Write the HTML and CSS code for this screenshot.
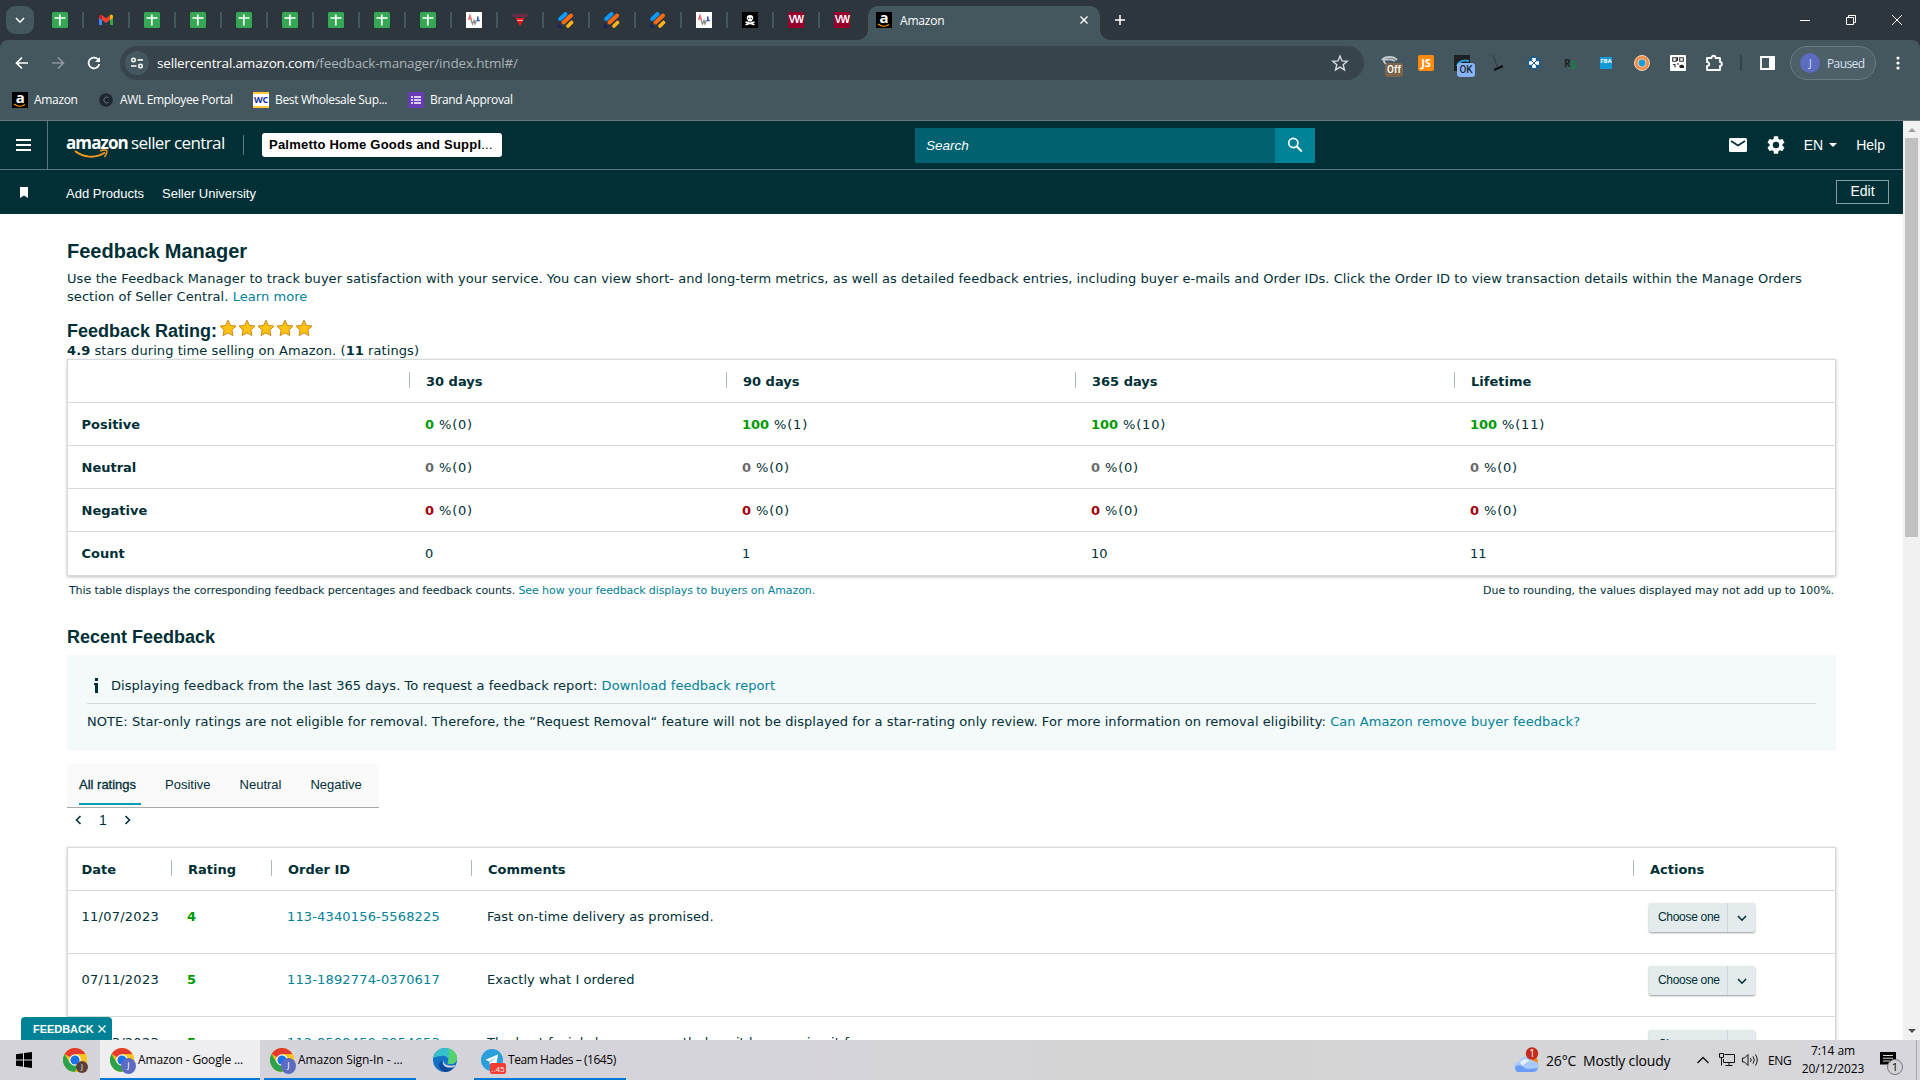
FILE: index.html
```html
<!DOCTYPE html>
<html lang="en">
<head>
    <meta charset="utf-8">
    <title>Amazon</title>
    <link rel="stylesheet" href="styles.css">
</head>

<body>
<!-- shared icons -->
<svg class="defs" xmlns="http://www.w3.org/2000/svg">
    <symbol id="sheets" viewBox="0 0 16 16">
        <rect width="16" height="16" rx="1.5" fill="#34a853"/>
        <path d="M2.5 6h11M7.8 2.5v11" stroke="#fff" stroke-width="1.7"/>
    </symbol>
    <symbol id="gmail" viewBox="0 0 16 16">
        <path d="M1 4v9h3V7z" fill="#4285f4"/>
        <path d="M15 4v9h-3V7z" fill="#34a853"/>
        <path d="M1 4.500c0-1.700 1.800-2.300 3-1.300V8L1 5.800z" fill="#c5221f"/>
        <path d="M15 4.500c0-1.700-1.800-2.300-3-1.300V8l3-2.200z" fill="#fbbc04"/>
        <path d="M4 3.200l4 3 4-3V8l-4 3-4-3z" fill="#ea4335"/>
    </symbol>
    <symbol id="stripes" viewBox="0 0 16 16">
        <path d="M0 11l5 5H0z" fill="#1b2559"/>
        <path d="M2.200 7L7.500 2" stroke="#0a9bff" stroke-width="4" stroke-linecap="round"/>
        <path d="M5.500 10.500L13 3.500" stroke="#ff6a13" stroke-width="4" stroke-linecap="round"/>
        <path d="M10 14L13.500 10.500" stroke="#ffb51b" stroke-width="3.600" stroke-linecap="round"/>
    </symbol>
    <symbol id="triangle" viewBox="0 0 16 16">
        <path d="M1 3.500h14" stroke="#8a1c2b" stroke-width="3"/>
        <path d="M0 3h16M2 5h12" stroke="#3b3f78" stroke-width="1" stroke-dasharray="2 1"/>
        <path d="M3.500 6h9L8 14z" fill="#f01818"/>
        <path d="M5 8.300h6" stroke="#fbb" stroke-width="1"/>
    </symbol>
    <symbol id="skull" viewBox="0 0 16 16">
        <rect width="16" height="16" fill="#000"/>
        <path d="M3.500 12.800l9-2.800M3.500 10l9 2.800" stroke="#fff" stroke-width="1.500"/>
        <path d="M8 3C4.300 3 4 6.800 5.800 8v1.600h4.400V8C12 6.800 11.700 3 8 3z" fill="#fff"/>
        <path d="M6.200 6.300h1M8.800 6.300h1" stroke="#000" stroke-width="1.200"/>
    </symbol>
    <symbol id="awl" viewBox="0 0 16 16">
        <rect width="16" height="16" fill="#fff"/>
        <path d="M2.500 8l1.500-4.500L5.500 8M3 6.500h2" stroke="#e86a6a" stroke-width="1.400" fill="none"/>
        <path d="M5 8l1.500 4L8 8.500 9 12l1.500-4" stroke="#888" stroke-width="1.300" fill="none"/>
        <path d="M11.800 4.500v4h2" stroke="#2f58b8" stroke-width="1.600" fill="none"/>
    </symbol>
    <symbol id="amazon" viewBox="0 0 16 16">
        <rect width="16" height="16" fill="#000"/>
        <text x="8" y="10.800" text-anchor="middle" fill="#fff" font-family="Open Sans" font-size="15" font-weight="bold">a</text>
        <path d="M2 12c3.500 2.800 8 2.800 11 .6" stroke="#f90" stroke-width="1.200" fill="none"/>
    </symbol>
    <symbol id="chrome" viewBox="0 0 24 24">
        <circle cx="12" cy="12" r="12" fill="#fbc116"/>
        <path d="M12 12L1.600 6A12 12 0 0 1 22.400 6z" fill="#e33b2e"/>
        <path d="M1.600 6A12 12 0 0 0 12 24l5.200-9L12 12 6.800 15z" fill="#2ba24c"/>
        <path d="M12 6h10.400A12 12 0 0 1 12 24l5.200-9z" fill="#fcc31e"/>
        <circle cx="12" cy="12" r="5.800" fill="#fff"/>
        <circle cx="12" cy="12" r="4.600" fill="#1a73e8"/>
    </symbol>
    <symbol id="star" viewBox="0 0 18 18">
        <path d="M9 1.200l2.400 5.200 5.600.7-4.100 3.900 1 5.600L9 13.900l-4.900 2.700 1-5.600L1 7.100l5.600-.7z" fill="#ffc20e" stroke="#c98a1a" stroke-width="1"/>
    </symbol>
    <symbol id="down" viewBox="0 0 10 10">
        <path d="M1 3l4 4.200L9 3" fill="none" stroke="currentColor" stroke-width="1.600"/>
    </symbol>
</svg>

<div class="browser">
    <!-- tab strip -->
    <div class="tabstrip">
        <div class="tab-search"><svg width="10" height="10"><use href="#down"/></svg></div>
        <div class="pinned">
            <span class="pin"><svg><use href="#sheets"/></svg></span>
            <span class="pin"><svg><use href="#gmail"/></svg></span>
            <span class="pin"><svg><use href="#sheets"/></svg></span>
            <span class="pin"><svg><use href="#sheets"/></svg></span>
            <span class="pin"><svg><use href="#sheets"/></svg></span>
            <span class="pin"><svg><use href="#sheets"/></svg></span>
            <span class="pin"><svg><use href="#sheets"/></svg></span>
            <span class="pin"><svg><use href="#sheets"/></svg></span>
            <span class="pin"><svg><use href="#sheets"/></svg></span>
            <span class="pin"><svg><use href="#awl"/></svg></span>
            <span class="pin"><svg><use href="#triangle"/></svg></span>
            <span class="pin"><svg><use href="#stripes"/></svg></span>
            <span class="pin"><svg><use href="#stripes"/></svg></span>
            <span class="pin"><svg><use href="#stripes"/></svg></span>
            <span class="pin"><svg><use href="#awl"/></svg></span>
            <span class="pin"><svg><use href="#skull"/></svg></span>
            <span class="pin"><b class="vw">VW</b></span>
            <span class="pin"><b class="vw">VW</b></span>
        </div>
        <div class="tab">
            <svg class="fav"><use href="#amazon"/></svg>
            <span class="tab-title">Amazon</span>
            <svg class="tab-close" width="8" height="8"><path d="M.5.5l7 7M7.500.5l-7 7" stroke="#fff" stroke-width="1.400"/></svg>
        </div>
        <svg class="new-tab" width="10" height="10"><path d="M5 0v10M0 5h10" stroke="#fff" stroke-width="1.500"/></svg>
        <div class="win-controls">
            <svg width="10" height="10"><path d="M0 5.500h10" stroke="#fff"/></svg>
            <svg width="10" height="10"><path d="M.5 2.500h7v7h-7zM2.500 2.500v-2h7v7h-2" fill="none" stroke="#fff"/></svg>
            <svg width="10" height="10"><path d="M0 0l10 10M10 0L0 10" stroke="#fff"/></svg>
        </div>
    </div>

    <!-- address bar -->
    <div class="toolbar">
        <svg class="nav" width="16" height="16" viewBox="0 0 16 16"><path d="M14 8H3M8 2.500L2.500 8 8 13.500" fill="none" stroke="#fff" stroke-width="1.700"/></svg>
        <svg class="nav dim" width="16" height="16" viewBox="0 0 16 16"><path d="M2 8h11M8 2.500L13.500 8 8 13.500" fill="none" stroke="#8b979d" stroke-width="1.700"/></svg>
        <svg class="nav" width="16" height="16" viewBox="0 0 16 16"><path d="M13.300 9A5.400 5.400 0 1 1 12 4.300L13.500 6" fill="none" stroke="#fff" stroke-width="1.700"/><path d="M14 2v5H9z" fill="#fff"/></svg>
        <div class="omnibox">
            <span class="site-info"><svg width="14" height="14" viewBox="0 0 14 14"><path d="M7.500 4H13M1 10h5.500" stroke="#fff" stroke-width="1.600"/><circle cx="3.500" cy="4" r="1.800" fill="none" stroke="#fff" stroke-width="1.400"/><circle cx="10.500" cy="10" r="1.800" fill="none" stroke="#fff" stroke-width="1.400"/></svg></span>
            <span class="url">sellercentral.amazon.com<em>/feedback-manager/index.html#/</em></span>
            <svg class="bookmark-star" width="18" height="18" viewBox="0 0 18 18"><path d="M9 2l2 4.900 5.200.4-4 3.400 1.300 5.200L9 13.100l-4.500 2.800 1.300-5.200-4-3.400L7 6.900z" fill="none" stroke="#d5dade" stroke-width="1.400"/></svg>
        </div>
        <div class="extensions">
            <span class="ext"><svg width="18" height="16"><path d="M1 5c3-4 12-4 15 0M2 4c1 4 3 5 5 7M3 5c4-1 8-1 11 1" stroke="#c3c8ca" stroke-width="1.800" fill="none"/></svg><i class="badge off">Off</i></span>
            <span class="ext"><b class="js">JS</b></span>
            <span class="ext"><svg width="16" height="16"><rect width="16" height="16" fill="#1e2124"/><path d="M3 11c2-5 7-6 12-5" stroke="#2d9bdc" stroke-width="2" fill="none"/></svg><i class="badge ok">OK</i></span>
            <span class="ext"><svg width="16" height="16"><path d="M3 0l5 14" stroke="#30383c"/><path d="M4 15l9-4" stroke="#111" stroke-width="2.400"/></svg></span>
            <span class="ext"><svg width="14" height="14"><circle cx="7" cy="7" r="6.800" fill="#1d5d8c"/><path d="M7 2v10M2 7h10" stroke="#fff" stroke-width="3.600"/><path d="M5 5l4 4M9 5l-4 4" stroke="#1d5d8c"/></svg></span>
            <span class="ext rs"><b>R</b><b class="green">S</b></span>
            <span class="ext"><b class="fba">FBA</b></span>
            <span class="ext"><svg width="16" height="16"><circle cx="8" cy="8" r="7.500" fill="#f08d45" stroke="#f4d6bd"/><circle cx="8" cy="8" r="4.500" fill="#f7c9a0"/><circle cx="8" cy="8" r="3.400" fill="#169edb"/></svg></span>
            <span class="ext"><svg width="16" height="16"><rect width="16" height="16" rx="1" fill="#fff"/><path d="M2.700 2.700h3.600v3.600H2.700zM9.700 2.700h3.600v3.600H9.700zM3 9.500h2v3M7.500 2v4M7 9h2" fill="none" stroke="#333" stroke-width="1.100"/><path d="M9 11c2-1 3-2 5 0v2h-4z" fill="#222"/></svg></span>
            <span class="ext"><svg width="18" height="18"><path d="M2 4h4.500c0-3 4-3 4 0H15v4c2.500 0 2.500 4 0 4v4H2v-4c3 0 3-4 0-4z" fill="none" stroke="#fff" stroke-width="1.800" stroke-linejoin="round"/></svg></span>
        </div>
        <span class="toolbar-sep"></span>
        <svg class="side-panel" width="16" height="16"><path d="M1 2h13v12H1z" fill="none" stroke="#fff" stroke-width="1.800"/><path d="M9 2h6v12H9z" fill="#fff"/></svg>
        <div class="profile"><span class="avatar">J</span>Paused</div>
        <svg class="kebab" width="4" height="16"><circle cx="2" cy="3" r="1.600" fill="#fff"/><circle cx="2" cy="8" r="1.600" fill="#fff"/><circle cx="2" cy="13" r="1.600" fill="#fff"/></svg>
    </div>

    <div class="bookmarks">
        <span class="bm bm-amazon"><svg class="fav"><use href="#amazon"/></svg>Amazon</span>
        <span class="bm bm-awl"><svg class="fav"><circle cx="7" cy="8" r="6.800" fill="#1e2730"/><path d="M9.500 5.500a3 3 0 1 0 0 5" fill="none" stroke="#687680"/></svg>AWL Employee Portal</span>
        <span class="bm bm-wc"><b class="wc">WC</b>Best Wholesale Sup...</span>
        <span class="bm bm-brand"><svg class="fav"><rect width="16" height="16" rx="1" fill="#673ab7"/><path d="M6 5h7M6 8h7M6 11h7M3 5h2M3 8h2M3 11h2" stroke="#fff" stroke-width="1.500"/></svg>Brand Approval</span>
    </div>
</div>

<div class="viewport">
    <div class="page">
        <!-- seller central header -->
        <div class="sc-nav">
            <div class="burger"><span></span><span></span><span></span></div>
            <div class="logo">
                <span class="logo-bold">amazon</span><span class="logo-thin">seller central</span>
                <svg class="smile" width="36" height="11" viewBox="0 0 36 11"><path d="M1 2c8 6.500 20 8 30 1.500" fill="none" stroke="#f7981d" stroke-width="2"/><path d="M26 2c3-1.500 7-1.500 7 0 0 2-1 4-2.500 6" fill="none" stroke="#f7981d" stroke-width="1.500"/></svg>
            </div>
            <span class="nav-sep"></span>
            <div class="account">Palmetto Home Goods and Suppl<span>...</span></div>
            <div class="search">
                <span class="search-input">Search</span>
                <span class="search-btn"><svg width="16" height="16" viewBox="0 0 16 16"><circle cx="6.300" cy="6" r="4.600" fill="none" stroke="#fff" stroke-width="1.700"/><path d="M9.800 9.500l5 5" stroke="#fff" stroke-width="2"/></svg></span>
            </div>
            <div class="nav-right">
                <svg width="18" height="14"><rect width="18" height="14" rx="1.500" fill="#fff"/><path d="M2 3l7 4.500L16 3" fill="none" stroke="#002f36" stroke-width="1.700"/></svg>
                <svg class="gear" width="18" height="18" viewBox="2 2 20 20"><path fill="#fff" d="M19.140 12.940c.04-.3.060-.61.060-.94s-.02-.64-.07-.94l2.030-1.580c.18-.14.230-.41.120-.61l-1.920-3.320c-.12-.22-.37-.29-.59-.22l-2.390.96c-.5-.38-1.030-.7-1.620-.94l-.36-2.540c-.04-.24-.24-.41-.48-.41h-3.840c-.24 0-.43.17-.47.41l-.36 2.540c-.59.24-1.130.57-1.620.94l-2.390-.96c-.22-.08-.47 0-.59.22L2.740 8.870c-.12.21-.08.470.12.610l2.030 1.580c-.05.3-.09.630-.09.940s.02.640.07.940l-2.030 1.580c-.18.14-.23.410-.12.610l1.920 3.320c.12.220.37.290.59.220l2.390-.96c.5.380 1.030.7 1.620.94l.36 2.540c.05.240.24.410.48.410h3.840c.24 0 .44-.17.470-.41l.36-2.540c.59-.24 1.130-.56 1.620-.94l2.390.96c.22.080.47 0 .59-.22l1.920-3.320c.12-.22.070-.47-.12-.61zM12 15.600A3.600 3.600 0 1 1 12 8.400a3.600 3.600 0 0 1 0 7.200z"/></svg>
                <span class="lang">EN</span>
                <span class="caret"></span>
                <span class="help">Help</span>
            </div>
        </div>
        <div class="sc-favs">
            <svg class="flag" width="8" height="11"><path d="M0 0h8v11L4 8.500 0 11z" fill="#fff"/></svg>
            <span class="fav-link add">Add Products</span>
            <span class="fav-link">Seller University</span>
            <span class="edit">Edit</span>
        </div>

        <div class="content">
            <h1>Feedback Manager</h1>
            <p class="intro">Use the Feedback Manager to track buyer satisfaction with your service. You can view short- and long-term metrics, as well as detailed feedback entries, including buyer e-mails and Order IDs. Click the Order ID to view transaction details within the Manage Orders<br>section of Seller Central. <a>Learn more</a></p>

            <div class="rating-line">
                <h2>Feedback Rating:</h2>
                <div class="stars">
                    <svg><use href="#star"/></svg><svg><use href="#star"/></svg><svg><use href="#star"/></svg><svg><use href="#star"/></svg><svg><use href="#star"/></svg>
                </div>
            </div>
            <p class="summary"><b>4.9</b> stars during time selling on Amazon. (<b>11</b> ratings)</p>

            <div class="table summary-table">
                <div class="row head"><span></span><span>30 days</span><span>90 days</span><span>365 days</span><span>Lifetime</span></div>
                <div class="row pos"><b>Positive</b><span><b>0</b> %(0)</span><span><b>100</b> %(1)</span><span><b>100</b> %(10)</span><span><b>100</b> %(11)</span></div>
                <div class="row neu"><b>Neutral</b><span><b>0</b> %(0)</span><span><b>0</b> %(0)</span><span><b>0</b> %(0)</span><span><b>0</b> %(0)</span></div>
                <div class="row neg"><b>Negative</b><span><b>0</b> %(0)</span><span><b>0</b> %(0)</span><span><b>0</b> %(0)</span><span><b>0</b> %(0)</span></div>
                <div class="row"><b>Count</b><span>0</span><span>1</span><span>10</span><span>11</span></div>
            </div>
            <div class="footnote">
                <span>This table displays the corresponding feedback percentages and feedback counts. <a>See how your feedback displays to buyers on Amazon.</a></span>
                <span class="rounding">Due to rounding, the values displayed may not add up to 100%.</span>
            </div>

            <h2 class="recent">Recent Feedback</h2>
            <div class="alert">
                <div class="alert-top"><svg width="5" height="15"><path d="M1 0h3v3H1zM0 5h4v10H1V7H0z" fill="#002f36"/></svg><span>Displaying feedback from the last 365 days. To request a feedback report: <a>Download feedback report</a></span></div>
                <div class="note">NOTE: Star-only ratings are not eligible for removal. Therefore, the ”Request Removal“ feature will not be displayed for a star-rating only review. For more information on removal eligibility: <a>Can Amazon remove buyer feedback?</a></div>
            </div>

            <div class="rating-tabs">
                <span class="active">All ratings</span><span>Positive</span><span>Neutral</span><span>Negative</span>
            </div>
            <div class="pager">
                <svg width="7" height="10"><path d="M5.500 1l-4 4 4 4" fill="none" stroke="#002f36" stroke-width="1.600"/></svg>
                <span>1</span>
                <svg width="7" height="10"><path d="M1.500 1l4 4-4 4" fill="none" stroke="#002f36" stroke-width="1.600"/></svg>
            </div>

            <div class="table feedback-table">
                <div class="row head"><span>Date</span><span>Rating</span><span>Order ID</span><span>Comments</span><span>Actions</span></div>
                <div class="row"><span class="num date">11/07/2023</span><span class="score">4</span><span class="num"><a>113-4340156-5568225</a></span><span>Fast on-time delivery as promised.</span><span class="action"><span class="choose"><span>Choose one</span><i><svg width="10" height="10"><use href="#down"/></svg></i></span></span></div>
                <div class="row"><span class="num date">07/11/2023</span><span class="score">5</span><span class="num"><a>113-1892774-0370617</a></span><span>Exactly what I ordered</span><span class="action"><span class="choose"><span>Choose one</span><i><svg width="10" height="10"><use href="#down"/></svg></i></span></span></div>
                <div class="row"><span class="num date">07/03/2023</span><span class="score">5</span><span class="num"><a>112-8598459-3954653</a></span><span>The best facial cleanser smooth, how it keeps using it f</span><span class="action"><span class="choose"><span>Choose one</span><i><svg width="10" height="10"><use href="#down"/></svg></i></span></span></div>
            </div>
        </div>
        <div class="feedback-btn">FEEDBACK <svg width="8" height="8"><path d="M.5.5l7 7M7.500.5l-7 7" stroke="#fff" stroke-width="1.200"/></svg></div>
    </div>
    <div class="scrollbar">
        <span class="arrow up"></span>
        <span class="thumb"></span>
        <span class="arrow down"></span>
    </div>
</div>

<!-- windows taskbar -->
<div class="taskbar">
    <svg class="start" width="16" height="16"><path d="M0 2.200L7 1.200V7.500H0zM8 1L16 0v7.500H8zM0 8.500h7v6.300L0 13.800zM8 8.500h8V16L8 15z" fill="#000"/></svg>
    <span class="app-icon chrome-pin"><svg width="24" height="24"><use href="#chrome"/></svg><i class="user brown">J</i></span>
    <div class="task current"><span class="app-icon"><svg width="24" height="24"><use href="#chrome"/></svg><i class="user">J</i></span><span class="t1">Amazon - Google ...</span></div>
    <div class="task second"><span class="app-icon"><svg width="24" height="24"><use href="#chrome"/></svg><i class="user">J</i></span><span class="t2">Amazon Sign-In - ...</span></div>
    <svg class="edge" width="24" height="24" viewBox="0 0 24 24">
        <circle cx="12" cy="12" r="12" fill="#1573c5"/>
        <path d="M.5 10C2 3 7 0 12 0c7 0 12 5 12 10 0 5-4 6-7 6-2 0-3-1-2-2 2-4-3-7-7-6-3 0-6 1-7.500 2z" fill="#35c1c9"/>
        <path d="M15 .5C21 2 24 6 24 10c0 5-4 6-7 6-2 0-3-1-2-2 1-3 2-9 0-13.500z" fill="#55d36c"/>
        <path d="M9 13c-1 5 5 8 12 6-3 4-6 5-9 5-6-1-9-9-3-11z" fill="#0d4a9b"/>
        <path d="M11 12c-1 4 3 7 12 5l-2 2C14 21 8 18 11 12z" fill="#d5d4da"/>
    </svg>
    <div class="task telegram"><span class="app-icon"><svg width="22" height="22"><circle cx="11" cy="11" r="11" fill="#2a9fdb"/><path d="M4.500 10.800L17 5.500l-2 11.500-4-3-2 2-.6-3.500z" fill="#fff"/><path d="M8.400 12.500L15 7.500l-5 6z" fill="#9cc9e8"/></svg><i class="count">..45</i></span><span class="t3">Team Hades – (1645)</span></div>

    <div class="tray">
        <svg class="weather" width="26" height="30"><circle cx="17" cy="17" r="7" fill="#f08a24"/><path d="M5 27a5 5 0 0 1 0-10 7.500 7.500 0 0 1 14-1 5.500 5.500 0 0 1 0 11z" fill="#a9c9fb"/><path d="M3 27a5 5 0 0 1-1-6c4-2 7 0 9 2s9 0 13 0c-1 3-3 4-5 4z" fill="#6c9df5"/><path d="M6 18a6 6 0 0 1 10-2c-3 0-5 3-7 5z" fill="#e3eeff"/><circle cx="18" cy="8.500" r="6.200" fill="#c42b1c"/><text x="18" y="12" text-anchor="middle" fill="#fff" font-family="Open Sans" font-size="10">1</text></svg>
        <span class="temp">26°C&nbsp; Mostly cloudy</span>
        <svg class="chev" width="12" height="8"><path d="M.5 7L6 1.500 11.500 7" fill="none" stroke="#111" stroke-width="1.400"/></svg>
        <svg class="net" width="17" height="14"><path d="M5.500 1.500h10v8h-11V6M10 9.500v3M6.500 12.500h7" fill="none" stroke="#111"/><path d="M.5.500h4v4h-4zM2.500 4.500v8" fill="none" stroke="#111"/></svg>
        <svg class="vol" width="17" height="14"><path d="M.5 5h2l3.500-3.500v11L2.500 9h-2z" fill="none" stroke="#111"/><path d="M8.500 5q1.400 2 0 4M11 3.300q2.500 3.700 0 7.400M13.500 1.500q3.500 5.500 0 11" fill="none" stroke="#111"/></svg>
        <span class="eng">ENG</span>
        <span class="clock"><span>7:14 am</span><span>20/12/2023</span></span>
        <span class="notify"><svg width="16" height="16"><path d="M0 0h16v12.500h-3V16l-3.500-3.500H0z" fill="#000"/><path d="M3 3.500h10M3 6.300h10M3 9h7" stroke="#d8d8dc" stroke-width="1.100"/></svg><i>1</i></span>
        <span class="peek"></span>
    </div>
</div>
</body>
</html>
```
FILE: styles.css
```css
* {
    box-sizing: border-box;
}
body {
    margin: 0;
    width: 1920px;
    height: 1080px;
    overflow: hidden;
    background-color: #FFFFFF;
    color: #002F36;
    font-family: "DejaVu Sans", Verdana, sans-serif;
    font-size: 13px;
}
svg {
    display: block;
    flex: none;
}
i, em {
    font-style: normal;
}
a {
    color: #008296;
}
h1, h2, p {
    margin: 0;
}
.defs {
    position: absolute;
    width: 0;
    height: 0;
}

/* Browser chrome */
.browser {
    height: 121px;
    background-color: #2C363C;
    border-bottom: 1px solid #6B797F;
    color: #FFFFFF;
    font-family: "Open Sans", sans-serif;
    font-size: 12px;
}
.tabstrip {
    display: flex;
    align-items: center;
    height: 40px;
    padding-left: 6px;
}
.tab-search {
    display: grid;
    place-items: center;
    width: 28px;
    height: 28px;
    margin-right: 4px;
    border-radius: 9px;
    background-color: #44575F;
}
.pinned {
    display: flex;
}
.pin {
    display: flex;
    align-items: center;
    justify-content: center;
    width: 46px;
    height: 16px;
    border-right: 2px solid #44575F;
}
.pin:last-child {
    border-color: transparent;
    margin-right: 2px;
}
.pin svg, .fav {
    width: 16px;
    height: 16px;
}
.vw {
    width: 16px;
    height: 16px;
    background-color: #96002B;
    font: bold 10px/16px "Liberation Sans", sans-serif;
    letter-spacing: -0.8px;
    text-align: center;
}
.tab {
    position: relative;
    display: flex;
    align-items: center;
    align-self: flex-end;
    width: 232px;
    height: 34px;
    padding: 0 12px 6px 8px;
    border-radius: 10px 10px 0 0;
    background-color: #44575F;
}
.tab::before, .tab::after {
    content: "";
    position: absolute;
    bottom: 0;
    left: -10px;
    width: 10px;
    height: 10px;
    background: radial-gradient(circle at 0 0, transparent 9.5px, #44575F 10px);
}
.tab::after {
    left: auto;
    right: -10px;
    background: radial-gradient(circle at 100% 0, transparent 9.5px, #44575F 10px);
}
.tab-title {
    flex: 1;
    margin-left: 8px;
    letter-spacing: -0.2px;
}
.new-tab {
    margin-left: 15px;
}
.win-controls {
    display: flex;
    gap: 36px;
    margin-left: auto;
    padding-right: 18px;
}
.toolbar {
    display: flex;
    align-items: center;
    height: 46px;
    padding: 0 20px 0 14px;
    border-radius: 8px 8px 0 0;
    background-color: #44575F;
}
.nav {
    margin-right: 20px;
}
.omnibox {
    display: flex;
    align-items: center;
    width: 1244px;
    height: 34px;
    margin-left: -2px;
    padding: 0 15px 0 5px;
    border-radius: 17px;
    background-color: #38444B;
}
.site-info {
    display: grid;
    place-items: center;
    width: 24px;
    height: 24px;
    border-radius: 50%;
    background-color: #44575F;
}
.url {
    flex: 1;
    margin-left: 8px;
    padding-bottom: 1px;
    font-size: 13.5px;
    letter-spacing: -0.18px;
}
.url em {
    color: #A9B2B7;
}
.extensions {
    display: flex;
    margin-left: 8px;
}
.ext {
    position: relative;
    display: flex;
    align-items: center;
    justify-content: center;
    width: 36px;
    height: 34px;
}
.badge {
    position: absolute;
    left: 13px;
    top: 17px;
    width: 18px;
    height: 14px;
    border-radius: 3px;
    font: 500 10px/14px Roboto, sans-serif;
    text-align: center;
}
.off {
    background-color: #7D654B;
}
.ok {
    background-color: #8AB4F8;
    color: #1B2733;
}
.js {
    width: 16px;
    height: 16px;
    border-radius: 2px;
    background-color: #FF8A0C;
    font: bold 11px/16px "Open Sans", sans-serif;
    text-align: center;
}
.rs {
    color: #1D2226;
    font-size: 10px;
}
.rs .green {
    margin-top: 3px;
    color: #0C8A3C;
}
.fba {
    width: 12px;
    height: 12px;
    background-color: #109AD7;
    font-size: 6px;
    line-height: 9px;
    text-align: center;
}
.toolbar-sep {
    width: 2px;
    height: 16px;
    margin-left: 8px;
    background-color: #33434A;
}
.side-panel {
    margin-left: 18px;
}
.profile {
    display: flex;
    align-items: center;
    width: 86px;
    height: 34px;
    margin-left: 14px;
    padding-left: 9px;
    border: 1px solid #6A7A81;
    border-radius: 17px;
    background-color: #4D6068;
    color: #D7E1F5;
    letter-spacing: -0.6px;
}
.avatar {
    width: 20px;
    height: 20px;
    margin-right: 7px;
    border-radius: 50%;
    background-color: #5C6BC0;
    font-size: 10px;
    line-height: 20px;
    text-align: center;
}
.kebab {
    margin-left: auto;
}
.bookmarks {
    display: flex;
    align-items: center;
    height: 34px;
    padding: 0 0 7px 12px;
    background-color: #44575F;
    letter-spacing: -0.33px;
}
.bm {
    display: flex;
    align-items: center;
    gap: 6px;
    white-space: nowrap;
}
.bm-amazon {
    width: 87px;
}
.bm-awl {
    width: 154px;
    gap: 5px;
    letter-spacing: -0.35px;
}
.bm-wc {
    width: 155px;
}
.wc {
    width: 16px;
    height: 16px;
    border-top: 2px solid #FFC83D;
    border-bottom: 2px solid #FFC83D;
    background-color: #FFFFFF;
    color: #12339B;
    font-size: 9px;
    line-height: 12px;
    text-align: center;
}

/* Page */
.viewport {
    display: flex;
    height: 919px;
}
.page {
    position: relative;
    width: 1903px;
    overflow: hidden;
}
.sc-nav {
    display: flex;
    align-items: center;
    height: 49px;
    border-bottom: 1px solid #5F777C;
    background-color: #002F36;
    color: #FFFFFF;
    font-family: "Liberation Sans", Arial, sans-serif;
}
.burger {
    display: flex;
    flex-direction: column;
    justify-content: center;
    gap: 3px;
    width: 48px;
    height: 48px;
    padding-left: 16px;
    border-right: 1px solid #5F777C;
}
.burger span {
    width: 15px;
    height: 2px;
    background-color: #FFFFFF;
}
.logo {
    position: relative;
    display: flex;
    align-items: baseline;
    width: 177px;
    margin-left: 18px;
    padding-bottom: 6px;
    font: 17px "Open Sans", sans-serif;
    white-space: nowrap;
}
.logo-bold {
    width: 65px;
    font-weight: bold;
    letter-spacing: -0.9px;
}
.logo-thin {
    letter-spacing: -0.6px;
}
.smile {
    position: absolute;
    left: 8px;
    top: 18px;
}
.nav-sep {
    width: 1px;
    height: 20px;
    background-color: #5F777C;
}
.account {
    width: 240px;
    height: 24px;
    margin-left: 18px;
    padding-left: 7px;
    border-radius: 3px;
    background-color: #FFFFFF;
    color: #000000;
    font-size: 13px;
    font-weight: bold;
    letter-spacing: 0.22px;
    line-height: 24px;
    white-space: nowrap;
}
.account span {
    font-weight: normal;
}
.search {
    display: flex;
    width: 400px;
    height: 35px;
    margin-left: 413px;
}
.search-input {
    flex: 1;
    padding-left: 11px;
    background-color: #006170;
    font-size: 13.5px;
    font-style: italic;
    line-height: 35px;
}
.search-btn {
    display: grid;
    place-items: center;
    width: 40px;
    background-color: #008296;
}
.nav-right {
    display: flex;
    align-items: center;
    margin-left: auto;
    padding-right: 18px;
    font-size: 14px;
}
.gear {
    margin: 0 19px 0 20px;
}
.caret {
    margin: 0 19px 0 6px;
    border: 4px solid transparent;
    border-top-color: #FFFFFF;
    border-bottom: 0;
}
.sc-favs {
    display: flex;
    align-items: center;
    height: 44px;
    padding: 0 14px 0 20px;
    background-color: #002F36;
    color: #FFFFFF;
    font: 13px "Liberation Sans", Arial, sans-serif;
}
.fav-link {
    padding-top: 2px;
}
.add {
    width: 96px;
    margin-left: 38px;
}
.edit {
    width: 53px;
    height: 24px;
    margin-left: auto;
    border: 1px solid #8A9A9E;
    font-size: 14px;
    line-height: 21px;
    text-align: center;
}
.content {
    padding: 25px 67px 0;
}
h1 {
    font: bold 20px/24px "Liberation Sans", Arial, sans-serif;
}
h2 {
    font: bold 18px/22px "Liberation Sans", Arial, sans-serif;
}
.intro {
    margin-top: 7px;
    letter-spacing: 0.054px;
    line-height: 18px;
    white-space: nowrap;
}
.rating-line {
    display: flex;
    height: 22px;
    margin-top: 14px;
}
.stars {
    display: flex;
    gap: 1px;
    margin: -1px 0 0 2px;
}
.stars svg {
    width: 18px;
    height: 18px;
}
.summary {
    height: 17px;
    letter-spacing: 0.08px;
    line-height: 18px;
}
.table {
    border: 1px solid #D5DBDB;
    box-shadow: 0 1px 3px rgba(0, 0, 0, 0.25);
}
.row {
    display: grid;
    align-items: center;
    border-bottom: 1px solid #D5DBDB;
}
.row:last-child {
    border-bottom: none;
}
.row > * {
    padding-left: 16px;
}
.row > :first-child {
    padding-left: 13.5px;
}
.head {
    height: 43px;
    font-weight: bold;
}
.head > span {
    height: 16px;
    margin-bottom: 2px;
    line-height: 19px;
}
.head > span + span {
    border-left: 1px solid #AAB7B8;
}
.summary-table .row {
    grid-template-columns: 341px 317px 349px 379px 1fr;
    height: 43px;
}
/* bold share, then the looser "%(n)" part */
.pos span, .neu span, .neg span {
    letter-spacing: 0.8px;
}
.row span b {
    letter-spacing: 0;
}
.pos span b, .score {
    color: #009900;
}
.neu span b {
    color: #6B6B6B;
}
.neg span b {
    color: #A30008;
}
.footnote {
    display: flex;
    justify-content: space-between;
    padding: 8px 2px 0;
    font-size: 11px;
    letter-spacing: -0.095px;
    line-height: 14px;
}
.rounding {
    letter-spacing: -0.04px;
}
.recent {
    margin-top: 28px;
}
.alert {
    height: 95px;
    margin-top: 7px;
    padding: 20px 20px 0;
    background-color: #F4F9FA;
}
.alert-top {
    display: flex;
    align-items: center;
    gap: 12px;
    height: 29px;
    padding: 0 0 8px 7px;
    border-bottom: 1px solid #D5DBDB;
    letter-spacing: 0.05px;
}
.note {
    margin-top: 9px;
    letter-spacing: 0.065px;
    line-height: 18px;
    white-space: nowrap;
}
.rating-tabs {
    display: flex;
    width: 312px;
    height: 44px;
    margin-top: 14px;
    padding-left: 12px;
    border-bottom: 1px solid #AAAAAA;
    background-color: #FAFAFA;
    font: 13px/41px "Liberation Sans", Arial, sans-serif;
    white-space: nowrap;
}
.rating-tabs span {
    flex: none;
    height: 41px;
    margin-right: 29px;
}
.rating-tabs .active {
    width: 62px;
    margin-right: 24px;
    border-bottom: 2px solid #00A0B4;
    -webkit-text-stroke: 0.3px #002F36;
}
.pager {
    display: flex;
    align-items: center;
    gap: 17px;
    height: 39px;
    padding: 0 0 16px 8px;
    font: 14px "Liberation Sans", Arial, sans-serif;
}
.feedback-table .row {
    grid-template-columns: 103px 100px 200px 1162px 1fr;
    height: 63px;
    padding-bottom: 12px;
    letter-spacing: 0.06px;
}
.feedback-table .head {
    height: 43px;
    padding-bottom: 0;
    letter-spacing: 0;
}
.num {
    letter-spacing: 0.15px;
}
.date {
    letter-spacing: 0.25px;
}
.score {
    font-weight: bold;
}
.feedback-table .action {
    padding: 3px 0 0 16px;
}
.choose {
    display: flex;
    width: 106px;
    height: 29px;
    border-radius: 2px;
    background-color: #E3EBEC;
    box-shadow: 0 1px 2px rgba(0, 0, 0, 0.4);
    font: 12px/28px "Liberation Sans", Arial, sans-serif;
    letter-spacing: -0.3px;
}
.choose span {
    width: 79px;
    padding-left: 9px;
    border-right: 1px solid #CDD6D8;
}
.choose i {
    display: grid;
    place-items: center;
    flex: 1;
}
.feedback-btn {
    position: absolute;
    left: 21px;
    bottom: 0;
    display: flex;
    align-items: center;
    gap: 4px;
    width: 91px;
    height: 23px;
    padding-left: 12px;
    border-radius: 4px 4px 0 0;
    background-color: #008296;
    color: #FFFFFF;
    font: bold 11px "Liberation Sans", Arial, sans-serif;
    letter-spacing: -0.05px;
}
.scrollbar {
    display: flex;
    flex-direction: column;
    align-items: center;
    width: 17px;
    background-color: #F1F1F1;
}
.thumb {
    width: 13px;
    height: 399px;
    background-color: #C1C1C1;
}
.arrow {
    border: 4px solid transparent;
}
.up {
    margin: 7px 0 6px;
    border-top: 0;
    border-bottom-color: #A3A3A3;
}
.down {
    margin: auto 0 7px;
    border-bottom: 0;
    border-top-color: #505050;
}

/* Taskbar */
.taskbar {
    display: flex;
    align-items: center;
    height: 40px;
    padding-left: 16px;
    background: linear-gradient(90deg, #D5D3DA, #D6D4DB 40%, #D4D4D4 60%, #D7D6DC);
    color: #000000;
    font: 12px "Open Sans", sans-serif;
}
.app-icon {
    position: relative;
}
.chrome-pin {
    margin: 0 13px 0 31px;
}
.user {
    position: absolute;
    left: 11px;
    top: 10px;
    width: 15px;
    height: 16px;
    border-radius: 50%;
    background-color: #5C6BC0;
    color: #FFFFFF;
    font-size: 9px;
    line-height: 16px;
    text-align: center;
}
.brown {
    left: 13px;
    top: 13px;
    width: 12px;
    height: 12px;
    background-color: #5D4037;
    font-size: 7px;
    line-height: 12px;
}
.task {
    display: flex;
    align-items: center;
    height: 40px;
    gap: 4px;
    padding-top: 1px;
    border-bottom: 2px solid #0078D7;
    letter-spacing: -0.14px;
    white-space: nowrap;
}
.current {
    width: 160px;
    padding-left: 10px;
    background-color: #EEEDF0;
}
.second {
    width: 152px;
    margin-left: 4px;
    padding-left: 6px;
    letter-spacing: -0.08px;
}
.edge {
    margin: 0 17px;
}
.telegram {
    width: 152px;
    gap: 5px;
    padding-left: 7px;
    letter-spacing: -0.45px;
}
.count {
    position: absolute;
    left: 9px;
    top: 14px;
    width: 16px;
    height: 11px;
    border-radius: 2px;
    background-color: #F23C34;
    color: #FFFFFF;
    font-size: 8px;
    letter-spacing: 0;
    line-height: 11px;
    text-align: center;
}
.tray {
    display: flex;
    align-items: center;
    height: 40px;
    margin-left: auto;
}
.temp {
    width: 138px;
    margin-left: 6px;
    font-size: 14px;
    letter-spacing: -0.18px;
    white-space: nowrap;
}
.chev {
    margin-right: 10px;
    margin-left: 13px;
}
.net {
    margin-right: 6px;
}
.eng {
    width: 24px;
    margin-left: 9px;
    letter-spacing: -0.3px;
}
.clock {
    display: flex;
    flex-direction: column;
    align-items: center;
    width: 58px;
    margin-left: 12px;
    letter-spacing: -0.1px;
    line-height: 18px;
}
.notify {
    position: relative;
    margin: 0 20px 0 18px;
}
.notify i {
    position: absolute;
    left: 7px;
    top: 7px;
    width: 16px;
    height: 16px;
    border: 1px solid #777777;
    border-radius: 50%;
    background-color: #D3D3D7;
    font-size: 11px;
    line-height: 14px;
    text-align: center;
}
.peek {
    width: 4px;
    height: 40px;
    border-left: 1px solid #A5A5AA;
}
```
